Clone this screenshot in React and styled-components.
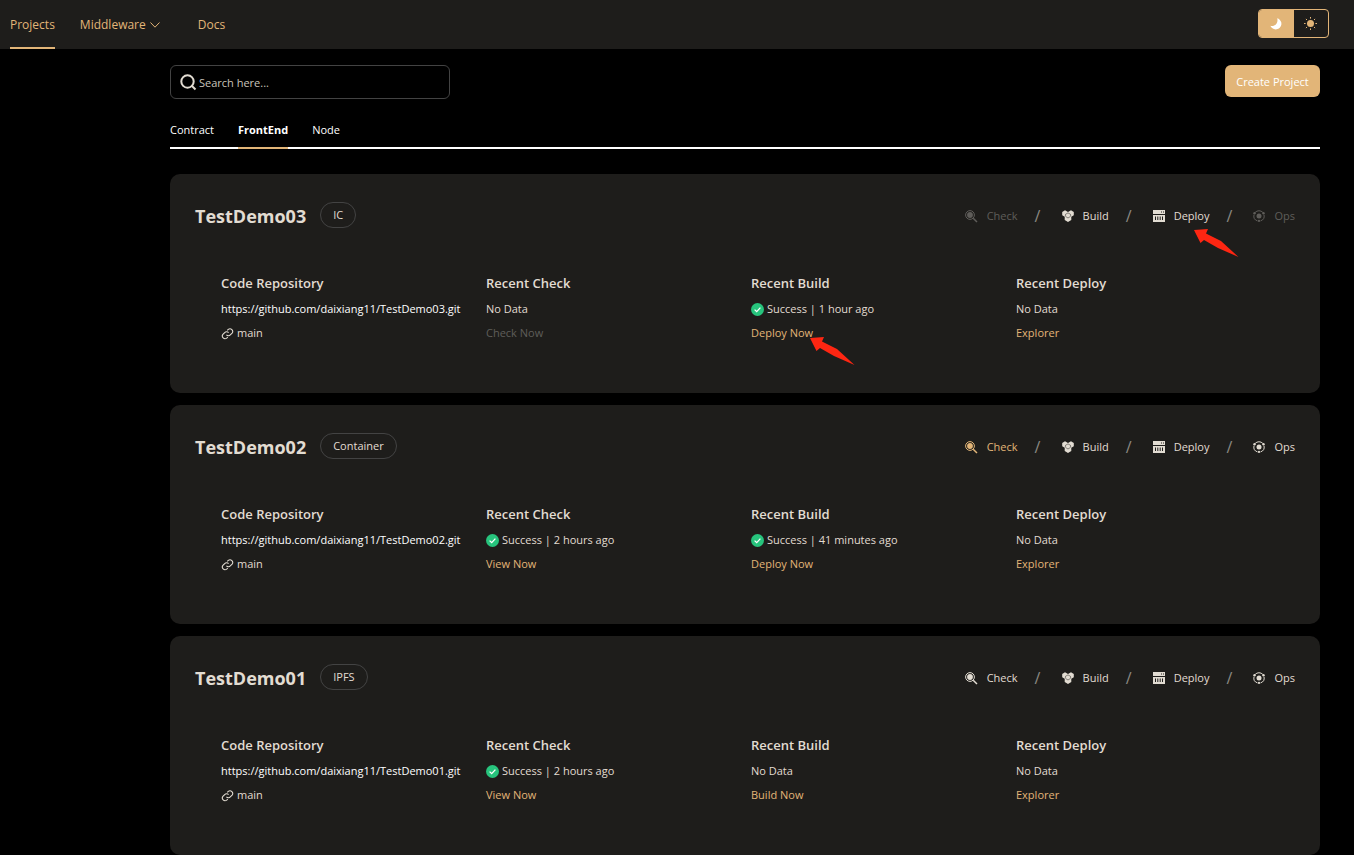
import React, { useState } from 'react';
import styled, { createGlobalStyle } from 'styled-components';

const GlobalStyle = createGlobalStyle`
  * {
    box-sizing: border-box;
  }

  body {
    margin: 0;
    background-color: #000;
    color: #e2dcd2;
    font-family: 'Open Sans', 'Noto Sans', sans-serif;
    font-size: 11px;
    line-height: 24px;
  }

  a {
    color: inherit;
    text-decoration: none;
  }

  button,
  input {
    font: inherit;
  }

  svg {
    display: block;
    flex: none;
  }
`;

const Header = styled.header`
  display: flex;
  align-items: flex-start;
  justify-content: space-between;
  height: 49px;
  padding: 0 25px 0 10px;
  background-color: #1e1d1b;
`;

const Nav = styled.nav`
  display: flex;
  height: 100%;
`;

const NavLink = styled.a`
  display: flex;
  align-items: center;
  gap: 4px;
  height: 100%;
  margin-right: ${props => props.$space || 0}px;
  padding-top: 2px;
  border-bottom: 2px solid ${props => (props.$active ? '#e2b578' : 'transparent')};
  color: #e2b578;
  font-size: 12px;
`;

const ThemeSwitch = styled.div`
  display: flex;
  width: 71px;
  height: 29px;
  margin-top: 9px;
  border: 1px solid #e2b578;
  border-radius: 4px;
  overflow: hidden;
`;

const ThemeButton = styled.button`
  display: flex;
  flex: 1;
  align-items: center;
  justify-content: center;
  padding: 0;
  border: 0;
  background-color: ${props => (props.$active ? '#e2b578' : 'transparent')};
  color: ${props => (props.$active ? '#fff' : '#e2b578')};
  cursor: pointer;
`;

const Main = styled.main`
  padding: 16px 34px 0 170px;
`;

const Toolbar = styled.div`
  display: flex;
  justify-content: space-between;
  align-items: flex-start;
`;

const SearchBox = styled.label`
  display: flex;
  align-items: center;
  gap: 2px;
  width: 280px;
  height: 34px;
  padding: 0 9px;
  border: 1px solid #434343;
  border-radius: 6px;

  input {
    flex: 1;
    min-width: 0;
    padding: 2px 0 0;
    border: 0;
    outline: none;
    background: transparent;
    color: #e2dcd2;
  }

  input::placeholder {
    color: #c9c4bb;
    opacity: 1;
  }
`;

const CreateButton = styled.button`
  width: 95px;
  height: 32px;
  padding: 2px 0 0;
  border: 0;
  border-radius: 6px;
  background-color: #e2b578;
  color: #fff;
  cursor: pointer;
`;

const Tabs = styled.div`
  display: flex;
  gap: 24px;
  height: 34px;
  margin: 16px 0 25px;
  background: linear-gradient(#fff, #fff) bottom / 100% 2px no-repeat;
`;

const Tab = styled.button`
  height: 34px;
  padding: 0 0 2px;
  border: 0;
  border-bottom: 2px solid ${props => (props.$active ? '#e2b578' : 'transparent')};
  background: transparent;
  color: #fff;
  font-weight: ${props => (props.$active ? 700 : 400)};
  cursor: pointer;
`;

const ProjectList = styled.div`
  display: flex;
  flex-direction: column;
  gap: 12px;
`;

const Card = styled.article`
  padding: 25px 25px 48px;
  border-radius: 10px;
  background-color: #1e1d1b;
`;

const CardHeader = styled.div`
  display: flex;
  align-items: center;
  justify-content: space-between;
  height: 32px;
  margin-bottom: 40px;
`;

const Title = styled.div`
  display: flex;
  align-items: center;
  gap: 14px;

  h2 {
    margin: 0;
    padding-top: 2px;
    font-size: 18px;
    font-weight: 700;
  }
`;

const Tag = styled.span`
  height: 26px;
  padding: 0 12px;
  border: 1px solid #434343;
  border-radius: 13px;
`;

const Actions = styled.div`
  display: flex;
  align-items: center;
  padding-top: 2px;
`;

const Slash = styled.span`
  width: 5px;
  margin: 0 22px 0 17px;
  color: #8b8882;
  font-size: 16px;
`;

const ActionButton = styled.button`
  position: relative;
  display: flex;
  align-items: center;
  gap: 9px;
  padding: 0;
  border: 0;
  background: transparent;
  color: ${props => props.$color || '#e2dcd2'};
  cursor: pointer;

  &:disabled {
    color: #5f5d5a;
    cursor: default;
  }
`;

const Columns = styled.div`
  display: grid;
  grid-template-columns: repeat(4, 1fr);
  padding: 0 14px 0 26px;

  h3 {
    margin: 0 0 2px;
    font-size: 13px;
    font-weight: 600;
  }
`;

const Line = styled.div`
  display: flex;
  align-items: center;
  gap: 3px;
  height: 24px;
  white-space: nowrap;
`;

const RepoLink = styled.a`
  color: #fff;
`;

const StepLink = styled.a`
  position: relative;
  color: ${props => (props.$disabled ? '#5f5d5a' : '#e2b578')};
`;

const Pointer = styled.svg`
  position: absolute;
  left: ${props => props.$left}px;
  top: ${props => props.$top}px;
`;

const Arrow = ({ left, top }) => (
  <Pointer $left={left} $top={top} width="45" height="29" viewBox="0 0 45 29" aria-hidden="true">
    <path d="M0 1 14 0 12 4.500 27 12 44.500 28 24 19 10 11 6.500 14Z" fill="#fe2612" />
  </Pointer>
);

const ChevronIcon = () => (
  <svg width="10" height="6" viewBox="0 0 10 6" fill="none" stroke="currentColor">
    <path d="M.5.5 5 5.200 9.500.5" />
  </svg>
);

const MoonIcon = () => (
  <svg width="12" height="12" viewBox="0 0 12 12" fill="currentColor">
    <path d="M7.200.2A5.700 5.700 0 1 1 .4 7.800C5 8.900 8.500 5 7.200.2Z" />
  </svg>
);

const SunIcon = () => (
  <svg width="13" height="13" viewBox="0 0 13 13" fill="currentColor" stroke="currentColor">
    <circle cx="6.500" cy="6.500" r="3.500" stroke="none" />
    <path d="M6.500 0v1.600M6.500 11.400V13M0 6.500h1.600M11.400 6.500H13M1.900 1.900l1.100 1.100M10 10l1.100 1.100M1.900 11.100 3 10M10 3l1.100-1.100" />
  </svg>
);

const SearchIcon = () => (
  <svg width="17" height="17" viewBox="0 0 17 17" fill="none" stroke="#e2dcd2" strokeWidth="2">
    <circle cx="7.500" cy="7.500" r="6.200" />
    <path d="m11.500 11.500 4 4" />
  </svg>
);

const LinkIcon = () => (
  <svg width="13" height="13" viewBox="0 0 24 24" fill="none" stroke="currentColor" strokeWidth="2">
    <path d="M10 14.500a5 5 0 0 0 7.200.2l3.300-3.300a5 5 0 0 0-7-7L11.500 6.300" />
    <path d="M14 10.500a5 5 0 0 0-7.200-.2l-3.300 3.300a5 5 0 0 0 7 7l2-1.900" />
  </svg>
);

const SuccessIcon = () => (
  <svg width="13" height="13" viewBox="0 0 13 13">
    <circle cx="6.500" cy="6.500" r="6.500" fill="#27c47d" />
    <path d="m3.600 6.600 2.100 2 3.700-4" fill="none" stroke="#fff" strokeWidth="1.300" />
  </svg>
);

const CheckIcon = () => (
  <svg width="13" height="13" viewBox="0 0 13 13" fill="none" stroke="currentColor">
    <circle cx="5" cy="5" r="4.400" />
    <circle cx="5" cy="5" r="2.900" fill="currentColor" stroke="none" />
    <path d="m8.200 8.200 3.800 3.800" strokeWidth="1.500" />
  </svg>
);

const BuildIcon = () => (
  <svg width="12" height="12" viewBox="0 0 12 12" fill="currentColor">
    <path d="M3 .3 5.600 1.800 6 2.200 6.400 1.800 9 .3l2.800 1.600v3.300L9.300 6.800v3.300L6 12 2.700 10.100V6.800L.2 5.200V1.900Z" />
    <path d="m3.300 6.300.2-2L6 2.900l2.500 1.400.2 2M3.600 6.500 6 8l2.400-1.500" fill="none" stroke="#1e1d1b" strokeWidth=".5" />
  </svg>
);

const DeployIcon = () => (
  <svg width="12" height="12" viewBox="0 0 12 12" fill="currentColor">
    <path fillRule="evenodd" d="M0 0h12v4H0ZM8 1.500v1h1v-1ZM10 1.500v1h1v-1ZM0 5h12v7H0ZM2 6.500V10h1V6.500ZM4.300 6.500V10h1V6.500ZM6.700 6.500V10h1V6.500ZM9 6.500V10h1V6.500Z" />
  </svg>
);

const OpsIcon = () => (
  <svg width="12" height="12" viewBox="0 0 12 12" fill="none" stroke="currentColor">
    <path d="M2.200 2.400A5.200 5.200 0 0 1 9.800 2.400M11 4.800a5.200 5.200 0 0 1-3.500 6.100M4.500 10.900A5.200 5.200 0 0 1 1 4.800" />
    <circle cx="6" cy="6" r="2.500" fill="currentColor" stroke="none" />
    <g fill="currentColor" stroke="none">
      <circle cx="1.500" cy="3.200" r="1.200" />
      <circle cx="10.500" cy="3.200" r="1.200" />
      <circle cx="6" cy="10.900" r="1.100" />
    </g>
  </svg>
);

const projects = [
  {
    name: 'TestDemo03',
    type: 'IC',
    disabled: ['Check', 'Ops'],
    pointed: true,
    check: { next: 'Check Now', off: true },
    build: { ago: '1 hour ago', next: 'Deploy Now', pointed: true },
  },
  {
    name: 'TestDemo02',
    type: 'Container',
    disabled: [],
    current: 'Check',
    check: { ago: '2 hours ago', next: 'View Now' },
    build: { ago: '41 minutes ago', next: 'Deploy Now' },
  },
  {
    name: 'TestDemo01',
    type: 'IPFS',
    disabled: [],
    check: { ago: '2 hours ago', next: 'View Now' },
    build: { next: 'Build Now' },
  },
];

const actions = [
  { label: 'Check', Icon: CheckIcon },
  { label: 'Build', Icon: BuildIcon },
  { label: 'Deploy', Icon: DeployIcon },
  { label: 'Ops', Icon: OpsIcon },
];

const Step = ({ title, ago, next, off, pointed }) => (
  <section>
    <h3>{title}</h3>
    <Line>
      {ago && <SuccessIcon />}
      {ago ? `Success | ${ago}` : 'No Data'}
    </Line>
    <Line>
      <StepLink href="#" $disabled={off}>
        {next}
        {pointed && <Arrow left={59} top={16} />}
      </StepLink>
    </Line>
  </section>
);

const Project = ({ project }) => (
  <Card>
    <CardHeader>
      <Title>
        <h2>{project.name}</h2>
        <Tag>{project.type}</Tag>
      </Title>
      <Actions>
        {actions.map(({ label, Icon }, index) => (
          <React.Fragment key={label}>
            {index > 0 && <Slash>/</Slash>}
            <ActionButton
              type="button"
              disabled={project.disabled.includes(label)}
              $color={project.current === label ? '#e2b578' : undefined}
            >
              <Icon />
              {label}
              {project.pointed && label === 'Deploy' && <Arrow left={41} top={25} />}
            </ActionButton>
          </React.Fragment>
        ))}
      </Actions>
    </CardHeader>
    <Columns>
      <section>
        <h3>Code Repository</h3>
        <Line>
          <RepoLink href={`https://github.com/daixiang11/${project.name}.git`}>
            {`https://github.com/daixiang11/${project.name}.git`}
          </RepoLink>
        </Line>
        <Line>
          <LinkIcon />
          main
        </Line>
      </section>
      <Step title="Recent Check" {...project.check} />
      <Step title="Recent Build" {...project.build} />
      <Step title="Recent Deploy" next="Explorer" />
    </Columns>
  </Card>
);

const App = () => {
  const [tab, setTab] = useState('FrontEnd');
  const [dark, setDark] = useState(true);

  return (
    <>
      <GlobalStyle />
      <Header>
        <Nav>
          <NavLink href="#" $active $space={25}>
            Projects
          </NavLink>
          <NavLink href="#" $space={38}>
            Middleware
            <ChevronIcon />
          </NavLink>
          <NavLink href="#">Docs</NavLink>
        </Nav>
        <ThemeSwitch>
          <ThemeButton type="button" aria-label="Dark" $active={dark} onClick={() => setDark(true)}>
            <MoonIcon />
          </ThemeButton>
          <ThemeButton type="button" aria-label="Light" $active={!dark} onClick={() => setDark(false)}>
            <SunIcon />
          </ThemeButton>
        </ThemeSwitch>
      </Header>
      <Main>
        <Toolbar>
          <SearchBox>
            <SearchIcon />
            <input type="text" aria-label="Search" placeholder="Search here..." />
          </SearchBox>
          <CreateButton type="button">Create Project</CreateButton>
        </Toolbar>
        <Tabs>
          {['Contract', 'FrontEnd', 'Node'].map(name => (
            <Tab key={name} type="button" $active={tab === name} onClick={() => setTab(name)}>
              {name}
            </Tab>
          ))}
        </Tabs>
        <ProjectList>
          {projects.map(project => (
            <Project key={project.name} project={project} />
          ))}
        </ProjectList>
      </Main>
    </>
  );
};

export default App;
